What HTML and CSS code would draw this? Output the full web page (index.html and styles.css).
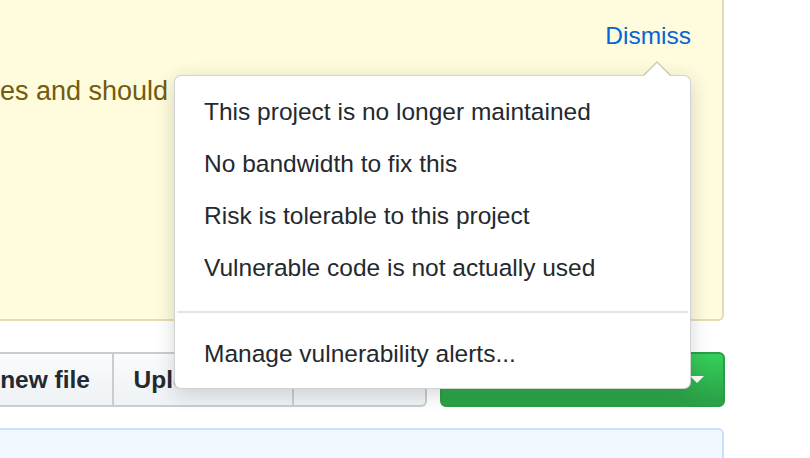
FILE: index.html
```html
<!DOCTYPE html>
<html lang="en">
<head>
<meta charset="utf-8">
<title>Vulnerability alert</title>
<link rel="stylesheet" href="styles.css">
</head>
<body>
<div class="page">
  <div class="flash">
    <div class="flash-top"><a class="dismiss" href="#">Dismiss</a></div>
    <div class="flash-msg">es and should</div>
  </div>
  <div class="toolbar">
    <div class="btn-group">
      <div class="btn btn-first">new file</div>
      <div class="btn btn-mid">Upload files</div>
      <div class="btn btn-last">Find file</div>
    </div>
    <div class="btn-green"><span>Clone or download</span><span class="caret"></span></div>
  </div>
  <div class="commit-box"></div>

  <div class="menu">
    <div class="item">This project is no longer maintained</div>
    <div class="item">No bandwidth to fix this</div>
    <div class="item">Risk is tolerable to this project</div>
    <div class="item">Vulnerable code is not actually used</div>
    <div class="divider"></div>
    <div class="item">Manage vulnerability alerts...</div>
  </div>
</div>
</body>
</html>
```
FILE: styles.css
```css
html, body {
  margin: 0;
  padding: 0;
  background: #ffffff;
}
body {
  font-family: "Liberation Sans", Arial, Helvetica, sans-serif;
  font-size: 24.5px;
  color: #24292e;
  overflow: hidden;
}
.page {
  position: relative;
  width: 810px;
  height: 458px;
  overflow: hidden;
}
.flash {
  box-sizing: border-box;
  width: 724px;
  height: 321px;
  background: #fffbdd;
  border-right: 2px solid #e3dcb4;
  border-bottom: 2px solid #e3dcb4;
  border-bottom-right-radius: 6px;
  padding: 18px 31px 0 0;
}
.flash-top {
  display: flex;
  justify-content: flex-end;
  height: 36px;
  line-height: 36px;
}
.dismiss {
  color: #0366d6;
  text-decoration: none;
}
.flash-msg {
  margin-top: 19px;
  height: 36px;
  line-height: 36px;
  font-size: 27px;
  white-space: nowrap;
  color: #735c0f;
}
.toolbar {
  margin-top: 31px;
  display: flex;
  gap: 13px;
  width: 725px;
  height: 55px;
}
.btn-group {
  display: flex;
  width: 427px;
  height: 55px;
}
.btn {
  box-sizing: border-box;
  height: 55px;
  display: flex;
  align-items: center;
  font-weight: bold;
  white-space: nowrap;
  overflow: hidden;
  background: linear-gradient(180deg, #fafbfc 0%, #eff3f6 90%);
  border-top: 2px solid #cacdd0;
  border-bottom: 2px solid #cacdd0;
  border-right: 2px solid #cacdd0;
}
.btn-first {
  width: 114px;
  justify-content: flex-end;
  padding-right: 22px;
}
.btn-mid {
  width: 180px;
  justify-content: center;
}
.btn-last {
  flex: 1;
  justify-content: center;
  border-top-right-radius: 6px;
  border-bottom-right-radius: 6px;
}
.btn-green {
  box-sizing: border-box;
  flex: 1;
  height: 55px;
  display: flex;
  align-items: center;
  justify-content: flex-end;
  gap: 10px;
  padding-right: 19px;
  color: #ffffff;
  font-weight: bold;
  white-space: nowrap;
  background: linear-gradient(180deg, #36cf5a 0%, #2ba247 90%);
  border: 2px solid #2b9d47;
  border-radius: 6px;
}
.caret {
  width: 0;
  height: 0;
  border-left: 7px solid transparent;
  border-right: 7px solid transparent;
  border-top: 7px solid #ffffff;
}
.commit-box {
  box-sizing: border-box;
  margin-top: 21px;
  width: 724px;
  height: 60px;
  background: #f1f8ff;
  border-top: 2px solid #c8e1ff;
  border-right: 2px solid #c8e1ff;
  border-top-right-radius: 6px;
}
.menu {
  position: absolute;
  top: 75px;
  left: 174px;
  width: 517px;
  box-sizing: border-box;
  background: #ffffff;
  border: 1px solid rgba(27, 31, 35, 0.2);
  border-radius: 7px;
  box-shadow: 0 5px 20px rgba(27, 31, 35, 0.18);
  padding: 10px 0 8px 0;
}
.menu::before {
  content: "";
  position: absolute;
  top: -15px;
  left: 468px;
  width: 0;
  height: 0;
  border-left: 14px solid transparent;
  border-right: 14px solid transparent;
  border-bottom: 14px solid rgba(27, 31, 35, 0.2);
}
.menu::after {
  content: "";
  position: absolute;
  top: -13px;
  left: 469px;
  width: 0;
  height: 0;
  border-left: 13px solid transparent;
  border-right: 13px solid transparent;
  border-bottom: 13px solid #ffffff;
}
.item {
  padding: 8px 20px 8px 29px;
  line-height: 36px;
  white-space: nowrap;
  color: #24292e;
}
.divider {
  height: 2px;
  margin: 17px 2px 15px 2px;
  background: #e1e4e8;
}
```
